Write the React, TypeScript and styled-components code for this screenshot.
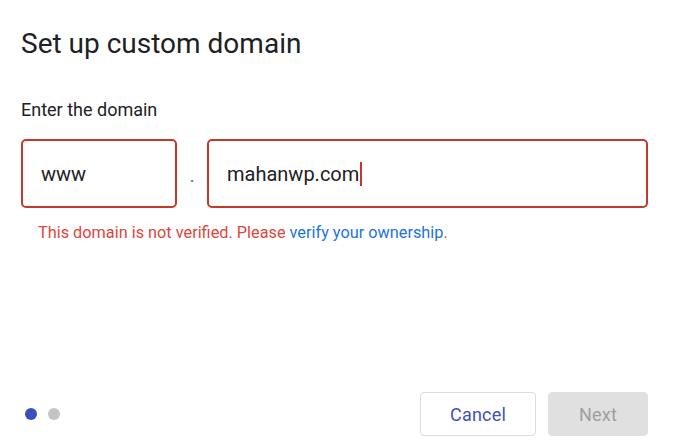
import React from "react";
import styled, { createGlobalStyle } from "styled-components";

const Global = createGlobalStyle`
  html, body { margin: 0; padding: 0; background: #fff; }
  body { font-family: Roboto, "Noto Sans", Arial, sans-serif; }
`;

const Dialog = styled.div`
  width: 673px;
  height: 445px;
  box-sizing: border-box;
  padding: 28px 25px 9px 21px;
  display: flex;
  flex-direction: column;
`;

const Title = styled.h1`
  margin: 0;
  font-family: Roboto, Arial, sans-serif;
  font-weight: 400;
  font-size: 28px;
  line-height: 32px;
  color: #202124;
`;

const Label = styled.div`
  margin-top: 39px;
  font-size: 18px;
  line-height: 22px;
  color: #202124;
`;

const FieldRow = styled.div`
  margin-top: 18px;
  display: flex;
  align-items: center;
`;

const Field = styled.div<{ $w?: number }>`
  box-sizing: border-box;
  height: 69px;
  ${(p) => (p.$w ? `width: ${p.$w}px;` : "flex: 1;")}
  border: 2px solid #c5392b;
  border-radius: 5px;
  padding: 0 18px;
  display: flex;
  align-items: center;
  font-size: 20px;
  color: #202124;
`;

const Dot = styled.span`
  width: 30px;
  text-align: center;
  font-size: 18px;
  color: #5f6368;
  padding-top: 4px;
`;

const Caret = styled.span`
  display: inline-block;
  width: 2px;
  height: 24px;
  background: #c5392b;
  margin-left: 1px;
`;

const ErrorText = styled.div`
  margin-top: 15px;
  margin-left: 17px;
  font-size: 16.3px;
  line-height: 20px;
  color: #e0463a;
`;

const Link = styled.a`
  color: #1a73e8;
  text-decoration: none;
`;

const Footer = styled.div`
  margin-top: auto;
  display: flex;
  align-items: center;
  justify-content: space-between;
`;

const Pager = styled.div`
  display: flex;
  gap: 11px;
  padding-left: 4px;
`;

const PageDot = styled.span<{ $active?: boolean }>`
  width: 12px;
  height: 12px;
  border-radius: 50%;
  background: ${(p) => (p.$active ? "#3c4eb8" : "#c4c4c4")};
`;

const Buttons = styled.div`
  display: flex;
  gap: 12px;
`;

const Button = styled.button<{ $primary?: boolean; $w: number }>`
  width: ${(p) => p.$w}px;
  height: 44px;
  border-radius: 4px;
  font-family: Roboto, Arial, sans-serif;
  font-size: 18px;
  font-weight: 400;
  letter-spacing: 0.2px;
  cursor: pointer;
  border: 1px solid ${(p) => (p.$primary ? "#e0e0e0" : "#dadce0")};
  background: ${(p) => (p.$primary ? "#e0e0e0" : "#fff")};
  color: ${(p) => (p.$primary ? "#9e9e9e" : "#3f51b5")};
`;

export default function App() {
  return (
    <>
      <Global />
      <Dialog>
        <Title>Set up custom domain</Title>
        <Label>Enter the domain</Label>
        <FieldRow>
          <Field $w={156}>www</Field>
          <Dot>.</Dot>
          <Field>
            mahanwp.com
            <Caret />
          </Field>
        </FieldRow>
        <ErrorText>
          This domain is not verified. Please <Link href="#">verify your ownership</Link>.
        </ErrorText>
        <Footer>
          <Pager>
            <PageDot $active />
            <PageDot />
          </Pager>
          <Buttons>
            <Button $w={116}>Cancel</Button>
            <Button $primary $w={100}>Next</Button>
          </Buttons>
        </Footer>
      </Dialog>
    </>
  );
}
